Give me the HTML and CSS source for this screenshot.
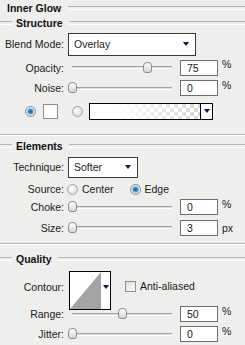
FILE: index.html
```html
<!DOCTYPE html>
<html>
<head>
<meta charset="utf-8">
<link rel="stylesheet" href="styles.css">
</head>
<body>
<div class="panel">
  <div class="legend legend-top"><span>Inner Glow</span></div>
  <div class="legend"><span>Structure</span></div>

  <div class="row row-blend">
    <span class="label">Blend Mode:</span>
    <div class="select select-blend"><span class="select-text">Overlay</span><span class="arrow"></span></div>
  </div>

  <div class="row row-slider row-first">
    <span class="label">Opacity:</span>
    <div class="slider"><div class="track"></div><div class="thumb" style="left:75px"></div></div>
    <div class="field">75</div><span class="unit unit-pct">%</span>
  </div>

  <div class="row row-slider">
    <span class="label">Noise:</span>
    <div class="slider"><div class="track"></div><div class="thumb" style="left:0px"></div></div>
    <div class="field">0</div><span class="unit unit-pct">%</span>
  </div>

  <div class="row row-color">
    <span class="radio radio-on"></span>
    <span class="swatch"></span>
    <span class="radio radio-off"></span>
    <div class="gradient"><span class="gradient-fill"></span><span class="gradient-btn"><span class="arrow"></span></span></div>
  </div>

  <div class="sep sep-1"></div>

  <div class="legend"><span>Elements</span></div>

  <div class="row row-technique">
    <span class="label">Technique:</span>
    <div class="select select-tech"><span class="select-text">Softer</span><span class="arrow"></span></div>
  </div>

  <div class="row row-source">
    <span class="label">Source:</span>
    <span class="radio radio-off src-radio"></span><span class="radio-text">Center</span>
    <span class="radio radio-on src-radio src-edge"></span><span class="radio-text">Edge</span>
  </div>

  <div class="row row-slider">
    <span class="label">Choke:</span>
    <div class="slider"><div class="track"></div><div class="thumb" style="left:0px"></div></div>
    <div class="field">0</div><span class="unit unit-pct">%</span>
  </div>

  <div class="row row-slider row-size">
    <span class="label">Size:</span>
    <div class="slider"><div class="track"></div><div class="thumb" style="left:0px"></div></div>
    <div class="field">3</div><span class="unit">px</span>
  </div>

  <div class="sep sep-2"></div>

  <div class="legend"><span>Quality</span></div>

  <div class="row row-contour">
    <span class="label label-contour">Contour:</span>
    <div class="contour">
      <span class="contour-preview">
        <svg width="31" height="37" viewBox="0 0 31 37"><polygon points="0,37 31,0 31,37" fill="#a3a3a3"/></svg>
      </span>
      <span class="contour-btn"><span class="arrow"></span></span>
    </div>
    <span class="checkbox"></span><span class="check-text">Anti-aliased</span>
  </div>

  <div class="row row-slider row-range">
    <span class="label">Range:</span>
    <div class="slider"><div class="track"></div><div class="thumb" style="left:50px"></div></div>
    <div class="field">50</div><span class="unit unit-pct">%</span>
  </div>

  <div class="row row-slider">
    <span class="label">Jitter:</span>
    <div class="slider"><div class="track"></div><div class="thumb" style="left:0px"></div></div>
    <div class="field">0</div><span class="unit unit-pct">%</span>
  </div>
</div>
</body>
</html>
```

FILE: styles.css
```css
* { box-sizing: border-box; margin: 0; padding: 0; }
html, body { width: 245px; height: 345px; overflow: hidden; }
body {
  background: #eeeeec;
  font-family: "Liberation Sans", Arial, sans-serif;
  font-size: 10.5px;
  color: #1a1a1a;
}
.panel { display: flex; flex-direction: column; }

/* group headers */
.legend {
  display: flex;
  align-items: center;
  height: 15px;
  font-weight: bold;
  color: #111;
}
.legend::before,
.legend::after {
  content: "";
  height: 2px;
  border-top: 1px solid #b5b5b3;
  border-bottom: 1px solid #ffffff;
}
.legend::before { width: 12px; margin-right: 4px; }
.legend::after { flex: 1; margin-left: 6px; }
.legend-top { padding-left: 7px; }
.legend-top::before { display: none; }
.legend-top::after { margin-left: 7px; }

.sep {
  height: 2px;
  border-top: 1px solid #b5b5b3;
  border-bottom: 1px solid #ffffff;
}
.sep-1 { margin-top: 10px; margin-bottom: 2px; }
.sep-2 { margin-top: 5px; margin-bottom: 6px; }

/* rows */
.row { display: flex; align-items: center; }
.label { width: 64px; text-align: right; flex: none; }

.row-blend { height: 26px; margin-top: 1px; }
.row-slider { height: 20px; }
.row-first { height: 21px; }
.row-size { height: 21px; }
.row-color { height: 26px; padding-left: 25px; }
.row-technique { height: 28px; }
.row-source { height: 16px; }
.row-contour { height: 44px; align-items: flex-start; padding-top: 5px; }
.row-range { margin-top: -6px; }

/* dropdowns */
.select {
  margin-left: 4px;
  display: flex;
  align-items: center;
  background: #fff;
  border: 1px solid #3a3a3a;
  padding-left: 5px;
  padding-right: 4px;
}
.select-blend { width: 128px; height: 23px; }
.select-tech { width: 70px; height: 21px; }
.select-text { flex: 1; }
.arrow {
  width: 0;
  height: 0;
  border-left: 3.5px solid transparent;
  border-right: 3.5px solid transparent;
  border-top: 4px solid #14144c;
}
.select .arrow { margin-right: 2px; }

/* sliders */
.slider {
  position: relative;
  width: 108px;
  height: 12px;
  margin-left: 4px;
  flex: none;
  display: flex;
  align-items: center;
  padding: 0 4px;
}
.track {
  flex: 1;
  height: 3px;
  border-top: 1px solid #a2a2a2;
  border-bottom: 1px solid #ffffff;
  background: #dcdcdc;
}
.thumb {
  position: absolute;
  top: 0;
  width: 9px;
  height: 11px;
  border: 1px solid #8a8a8a;
  border-radius: 4px 4px 3px 3px;
  background: linear-gradient(#ffffff, #d6d6d6);
}

.field {
  width: 38px;
  height: 16px;
  margin-left: 4px;
  flex: none;
  background: #fff;
  border: 1px solid #6f6f6f;
  padding-left: 6px;
  line-height: 14px;
}
.unit { margin-left: 4px; }
.unit-pct { align-self: flex-start; margin-top: 1px; }

/* radios */
.radio {
  width: 11px;
  height: 11px;
  border-radius: 50%;
  flex: none;
}
.radio-on {
  border: 1px solid #7d8c99;
  background: radial-gradient(circle at 50% 50%, #1a5e8e 0, #3a8cc4 2px, #9cc6e2 3px, #eef5fa 4.5px);
}
.radio-off {
  border: 1px solid #a3a3a3;
  background: radial-gradient(circle at 40% 40%, #ffffff 0, #e2e2e2 5px);
}
.row-color .radio-off { margin-left: 14px; }

.swatch {
  width: 15px;
  height: 15px;
  margin-left: 7px;
  background: #fff;
  border: 1px solid #8d8d8d;
  flex: none;
}

.gradient {
  margin-left: 6px;
  width: 124px;
  height: 17px;
  border: 1px solid #000;
  display: flex;
  flex: none;
}
.gradient-fill {
  flex: 1;
  background:
    linear-gradient(to right, #ffffff 25%, rgba(255,255,255,0) 100%),
    repeating-conic-gradient(#d6d6d6 0 25%, #ffffff 0 50%) 0 0 / 8px 8px;
}
.gradient-btn {
  width: 12px;
  border-left: 1px solid #000;
  background: #fff;
  display: flex;
  align-items: center;
  justify-content: center;
}

/* source */
.src-radio { margin-left: 3px; }
.src-edge { margin-left: 16px; }
.radio-text { margin-left: 4px; }

/* contour */
.label-contour { margin-top: 10px; }
.contour {
  margin-left: 5px;
  width: 42px;
  height: 39px;
  border: 1px solid #000;
  background: #fff;
  display: flex;
  flex: none;
}
.contour-preview { width: 31px; display: flex; }
.contour-btn {
  flex: 1;
  display: flex;
  justify-content: center;
  padding-top: 13px;
}
.checkbox {
  width: 11px;
  height: 11px;
  margin-left: 14px;
  margin-top: 10px;
  border: 1px solid #8e8f8f;
  background: linear-gradient(135deg, #dcdcd8, #ffffff);
  flex: none;
}
.check-text { margin-left: 4px; margin-top: 9px; }
```
